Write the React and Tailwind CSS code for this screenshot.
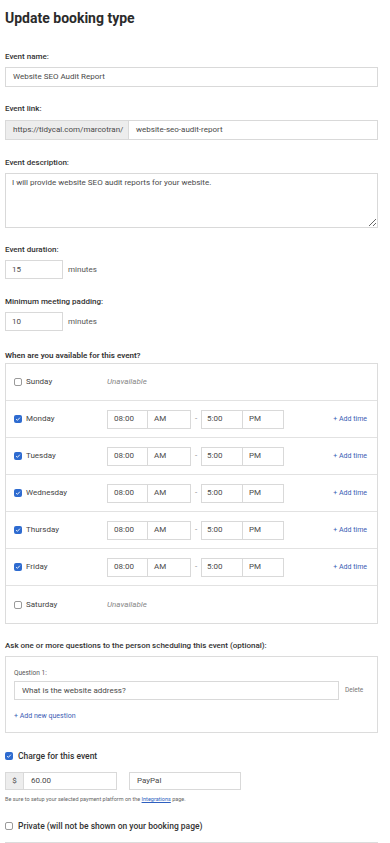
import { useState } from "react"

const days = [
  { name: "Sunday", on: false },
  { name: "Monday", on: true },
  { name: "Tuesday", on: true },
  { name: "Wednesday", on: true },
  { name: "Thursday", on: true },
  { name: "Friday", on: true },
  { name: "Saturday", on: false },
]

function Check({ on }) {
  if (on) {
    return (
      <span className="flex h-[8px] w-[8px] items-center justify-center rounded-[2px] bg-[#2e6bd0]">
        <svg viewBox="0 0 8 8" className="h-[6px] w-[6px]">
          <path d="M1.5 4.2 L3.2 5.8 L6.5 2.2" fill="none" stroke="#fff" strokeWidth="1.2" />
        </svg>
      </span>
    )
  }
  return <span className="block h-[8px] w-[8px] rounded-[2px] border border-[#9a9a9a] bg-white" />
}

function Label({ children, className = "" }) {
  return <div className={`text-[8px] leading-[10px] font-medium text-[#333] ${className}`}>{children}</div>
}

function Box({ children, className = "" }) {
  return (
    <div className={`flex items-center border border-[#d9d9d9] bg-white text-[8px] text-[#4a4a4a] ${className}`}>
      {children}
    </div>
  )
}

function DayRow({ day, last }) {
  return (
    <div className={`flex h-[37px] items-center pl-[8px] pr-[10px] ${last ? "" : "border-b border-[#e2e2e2]"}`}>
      <Check on={day.on} />
      <span className="ml-[4px] w-[81px] text-[8px] text-[#444]">{day.name}</span>
      {day.on ? (
        <>
          <Box className="h-[19px] w-[41px] pl-[6px]">08:00</Box>
          <Box className="-ml-px h-[19px] w-[44px] pl-[6px]">AM</Box>
          <span className="w-[10px] text-center text-[8px] text-[#888]">-</span>
          <Box className="h-[19px] w-[42px] pl-[5px]">5:00</Box>
          <Box className="-ml-px h-[19px] w-[42px] pl-[6px]">PM</Box>
          <span className="ml-auto text-[7px] text-[#3a5db4]">+ Add time</span>
        </>
      ) : (
        <span className="text-[8px] italic text-[#888]">Unavailable</span>
      )}
    </div>
  )
}

export default function App() {
  const [desc] = useState("I will provide website SEO audit reports for your website.")

  return (
    <div className="min-h-[843px] bg-white px-[5px] pb-[1px] font-['Roboto',sans-serif] text-[#333]">
      <h1 className="pt-[9px] text-[14px] leading-[18px] font-bold text-[#2b2b2b]">Update booking type</h1>

      <Label className="mt-[25px]">Event name:</Label>
      <Box className="mt-[5px] h-[20px] w-[373px] pl-[7px]">Website SEO Audit Report</Box>

      <Label className="mt-[17px]">Event link:</Label>
      <div className="mt-[6px] flex h-[20px] w-[373px]">
        <Box className="w-[124px] !bg-[#ededed] pl-[7px]">https://tidycal.com/marcotran/</Box>
        <Box className="-ml-px flex-1 pl-[7px]">website-seo-audit-report</Box>
      </div>

      <Label className="mt-[18px]">Event description:</Label>
      <textarea
        readOnly
        value={desc}
        className="mt-[5px] block h-[55px] w-[373px] border border-[#d9d9d9] px-[6px] py-[4px] text-[8px] leading-[10px] text-[#4a4a4a] outline-none"
      />

      <Label className="mt-[17px]">Event duration:</Label>
      <div className="mt-[5px] flex items-center">
        <Box className="h-[19px] w-[58px] pl-[6px]">15</Box>
        <span className="ml-[5px] text-[8px] text-[#555]">minutes</span>
      </div>

      <Label className="mt-[18px]">Minimum meeting padding:</Label>
      <div className="mt-[5px] flex items-center">
        <Box className="h-[19px] w-[58px] pl-[6px]">10</Box>
        <span className="ml-[5px] text-[8px] text-[#555]">minutes</span>
      </div>

      <Label className="mt-[20px] font-semibold">When are you available for this event?</Label>
      <div className="mt-[2px] w-[373px] border border-[#dcdcdc]">
        {days.map((d, i) => (
          <DayRow key={d.name} day={d} last={i === days.length - 1} />
        ))}
      </div>

      <Label className="mt-[17px]">Ask one or more questions to the person scheduling this event (optional):</Label>
      <div className="mt-[5px] h-[77px] w-[373px] border border-[#dcdcdc] px-[8px] pt-[11px]">
        <div className="text-[6.5px] leading-[10px] text-[#555]">Question 1:</div>
        <div className="mt-[3px] flex items-center">
          <Box className="h-[19px] w-[325px] pl-[7px]">What is the website address?</Box>
          <span className="ml-[6px] text-[6.5px] text-[#777]">Delete</span>
        </div>
        <div className="mt-[11px] text-[7px] text-[#3a5db4]">+ Add new question</div>
      </div>

      <div className="mt-[18px] flex items-center">
        <Check on />
        <span className="ml-[5px] text-[8.5px] leading-[10px] font-medium text-[#333]">Charge for this event</span>
      </div>
      <div className="mt-[11px] flex h-[18px]">
        <Box className="w-[19px] justify-center !bg-[#ededed]">$</Box>
        <Box className="-ml-px w-[94px] pl-[7px]">60.00</Box>
        <Box className="ml-[12px] w-[112px] pl-[7px]">PayPal</Box>
      </div>
      <div className="mt-[6px] text-[5.5px] leading-[7px] text-[#666]">
        Be sure to setup your selected payment platform on the{" "}
        <span className="text-[#2e5fc0] underline">Integrations</span> page.
      </div>

      <div className="mt-[18px] flex items-center">
        <Check on={false} />
        <span className="ml-[5px] text-[8.5px] leading-[10px] font-medium text-[#333]">
          Private (will not be shown on your booking page)
        </span>
      </div>
      <div className="mt-[11px] w-[373px] border-t border-[#dcdcdc]" />
    </div>
  )
}
